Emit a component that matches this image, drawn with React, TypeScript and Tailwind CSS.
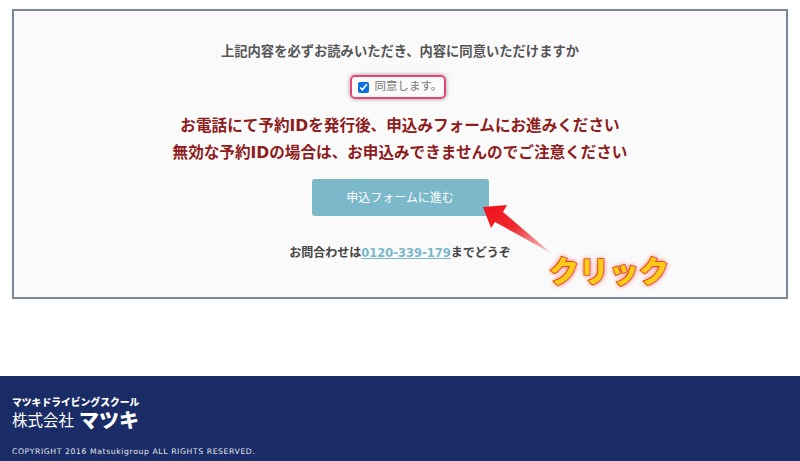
const jp = "font-['Inter','Noto_Sans_CJK_JP',sans-serif]"

function ClickArrow() {
  return (
    <svg width="70" height="50" viewBox="0 0 70 50" className="absolute left-[469px] top-[194px]">
      <defs>
        <linearGradient id="arrowFill" x1="0" y1="0" x2="1" y2="1">
          <stop offset="0" stopColor="#f01018" />
          <stop offset="0.45" stopColor="#ee2a30" />
          <stop offset="1" stopColor="#f4d0d4" />
        </linearGradient>
      </defs>
      <path d="M0 2 L24 0 L20 7 L68 48 L12 17 L8 23 Z" fill="url(#arrowFill)" />
    </svg>
  )
}

export default function App() {
  return (
    <div className={`w-[800px] h-[461px] overflow-hidden bg-white flex flex-col ${jp}`}>
      <div className="pt-[9px] px-3 h-[376px] shrink-0">
        <div className="relative h-[290px] border-2 border-[#7b8696] bg-[#fafafa] flex flex-col items-center">
          <p className="mt-[30px] text-[13.3px] leading-5 font-bold text-[#555555]">
            上記内容を必ずお読みいただき、内容に同意いただけますか
          </p>
          <label className="mt-[14px] -ml-[5px] w-[96px] h-[24px] flex items-center gap-[6px] pl-[6px] rounded-[5px] border-[2.5px] border-[#e8447a] shadow-[0_0_4px_rgba(0,0,0,0.4)] text-[11.5px] whitespace-nowrap text-[#777777]">
            <input type="checkbox" defaultChecked className="shrink-0 w-[11px] h-[11px] m-0 accent-[#0b6fe0]" />
            同意します。
          </label>
          <p className="mt-[14px] text-[15.6px] leading-[27px] font-bold text-[#8e1c1c] text-center font-['DejaVu_Sans','Noto_Sans_CJK_JP',sans-serif]">
            お電話にて予約IDを発行後、申込みフォームにお進みください
            <br />
            無効な予約IDの場合は、お申込みできませんのでご注意ください
          </p>
          <button className="mt-[12px] w-[177px] h-[37px] rounded-[3px] bg-[#7ab8ca] text-[12px] text-white">
            申込フォームに進む
          </button>
          <p className="mt-[27px] text-[12px] leading-5 font-bold text-[#444444]">
            お問合わせは
            <a className="text-[#7ab8ca] underline text-[11.5px] font-['DejaVu_Sans',sans-serif]">0120-339-179</a>
            までどうぞ
          </p>
          <ClickArrow />
          <span className="absolute left-[535px] top-[242px] text-[30px] leading-9 font-black text-[#fbcb17] whitespace-nowrap [-webkit-text-stroke:1.5px_#d9460c] [paint-order:stroke_fill] [text-shadow:0_0_5px_#e5231b]">
            クリック
          </span>
        </div>
      </div>
      <footer className="flex-1 bg-[#1a2c66] pl-3 pt-[21px] text-white">
        <div className="text-[9.8px] leading-[12px] font-black">マツキドライビングスクール</div>
        <div className="flex items-center h-[24px]">
          <span className="text-[15.5px] leading-5">株式会社</span>
          <span className="ml-[5px] text-[20px] leading-6 font-black">マツキ</span>
        </div>
        <p className="mt-[13px] text-[7.7px] leading-3 tracking-[0.6px] text-[#e2e5ee] font-['DejaVu_Sans',sans-serif]">
          COPYRIGHT 2016 Matsukigroup ALL RIGHTS RESERVED.
        </p>
      </footer>
    </div>
  )
}
